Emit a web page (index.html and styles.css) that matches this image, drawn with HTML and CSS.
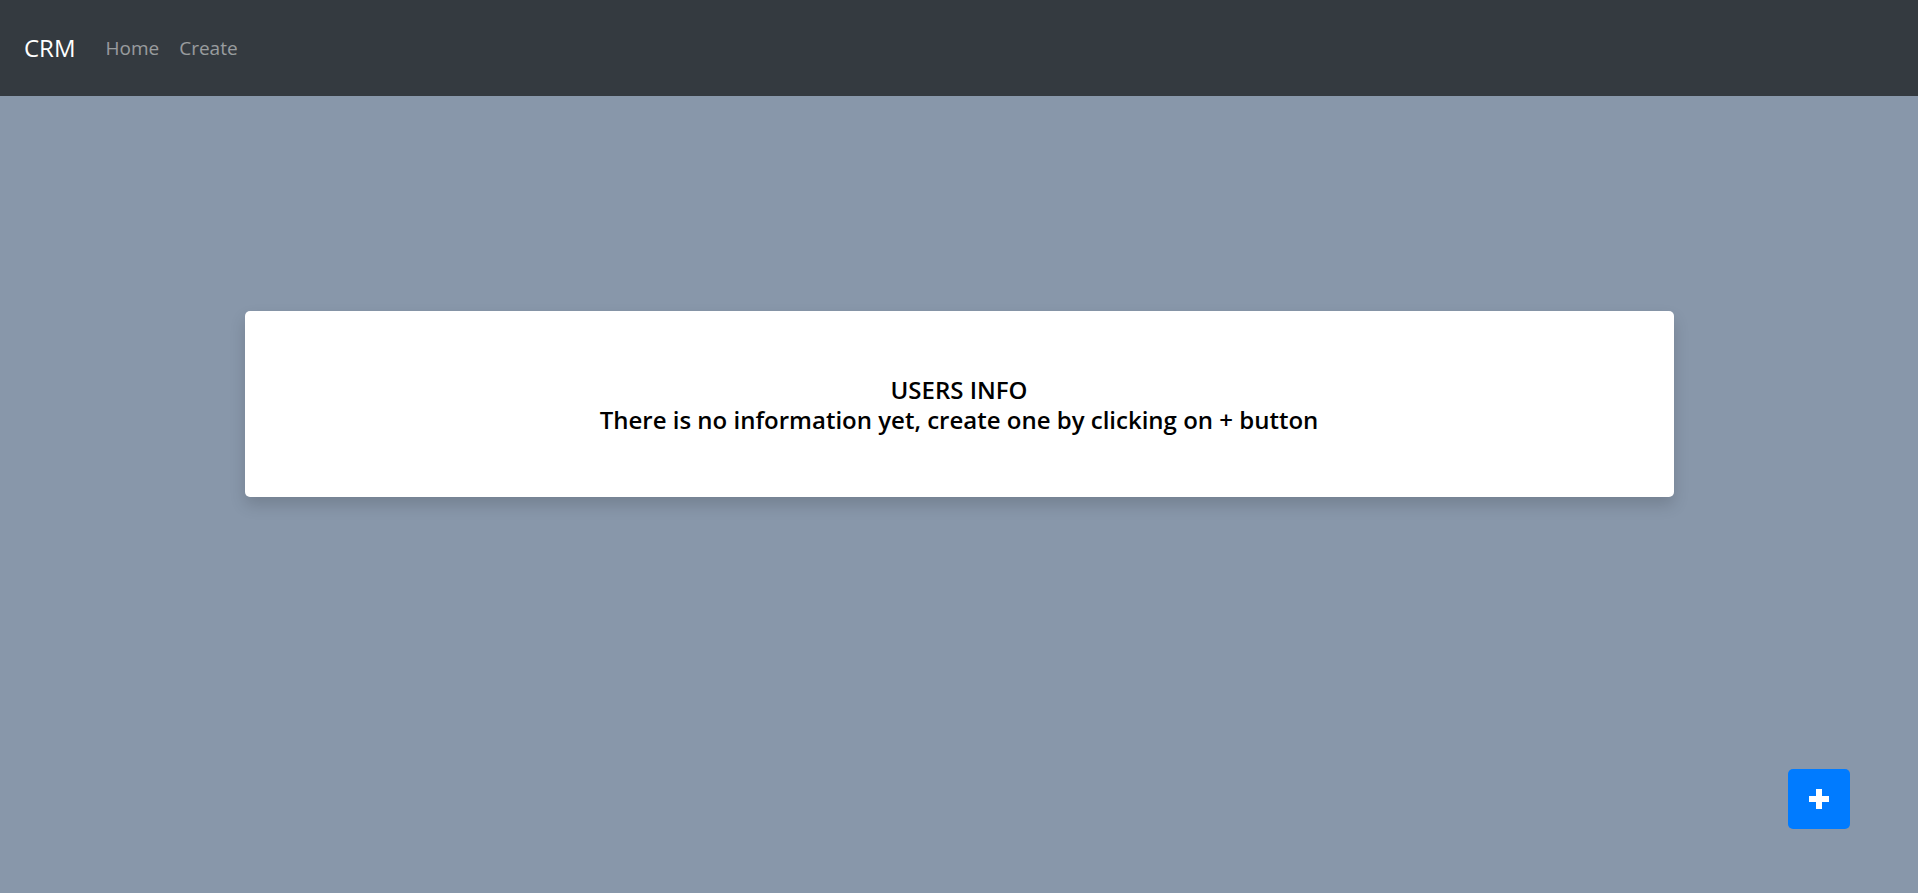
FILE: index.html
```html
<!DOCTYPE html>
<html lang="en">
<head>
<meta charset="utf-8">
<title>CRM</title>
<link rel="stylesheet" href="styles.css">
</head>
<body>
<nav class="navbar">
  <a class="brand" href="#">CRM</a>
  <ul class="nav-links">
    <li><a href="#">Home</a></li>
    <li><a href="#">Create</a></li>
  </ul>
</nav>
<main class="main">
  <section class="card">
    <h4 class="card-title">USERS INFO<br>There is no information yet, create one by clicking on + button</h4>
  </section>
</main>
<button class="fab" aria-label="Add">
  <svg width="20" height="20" viewBox="0 0 20 20"><path d="M7 0h6v7h7v6h-7v7H7v-7H0V7h7z" fill="#fff"/></svg>
</button>
</body>
</html>
```
FILE: styles.css
```css
* { box-sizing: border-box; }
html, body { margin: 0; height: 100%; }
body {
  background: #8897aa;
  font-family: "Open Sans", "Noto Sans", "DejaVu Sans", sans-serif;
  color: #000;
}
.navbar {
  height: 96px;
  background: #343a40;
  display: flex;
  align-items: center;
  padding: 0 24px;
}
.brand {
  color: #fff;
  text-decoration: none;
  font-size: 24px;
  margin-right: 30px;
  margin-top: -2px;
}
.nav-links {
  list-style: none;
  margin: 0;
  padding: 0;
  display: flex;
  gap: 20px;
}
.nav-links a {
  color: rgba(255,255,255,0.5);
  text-decoration: none;
  font-size: 19px;
}
.main {
  display: flex;
  justify-content: center;
  padding-top: 215px;
}
.card {
  width: 1429px;
  background: #fff;
  border-radius: 5px;
  box-shadow: 0 8px 16px rgba(0,0,0,0.15);
  padding: 64px 0 62px;
  text-align: center;
}
.card-title {
  margin: 0;
  font-size: 24px;
  font-weight: 600;
  line-height: 30px;
}
.fab {
  position: fixed;
  right: 68px;
  bottom: 64px;
  width: 62px;
  height: 60px;
  border: none;
  border-radius: 5px;
  background: #007bff;
  display: flex;
  align-items: center;
  justify-content: center;
  padding: 0;
}
```
